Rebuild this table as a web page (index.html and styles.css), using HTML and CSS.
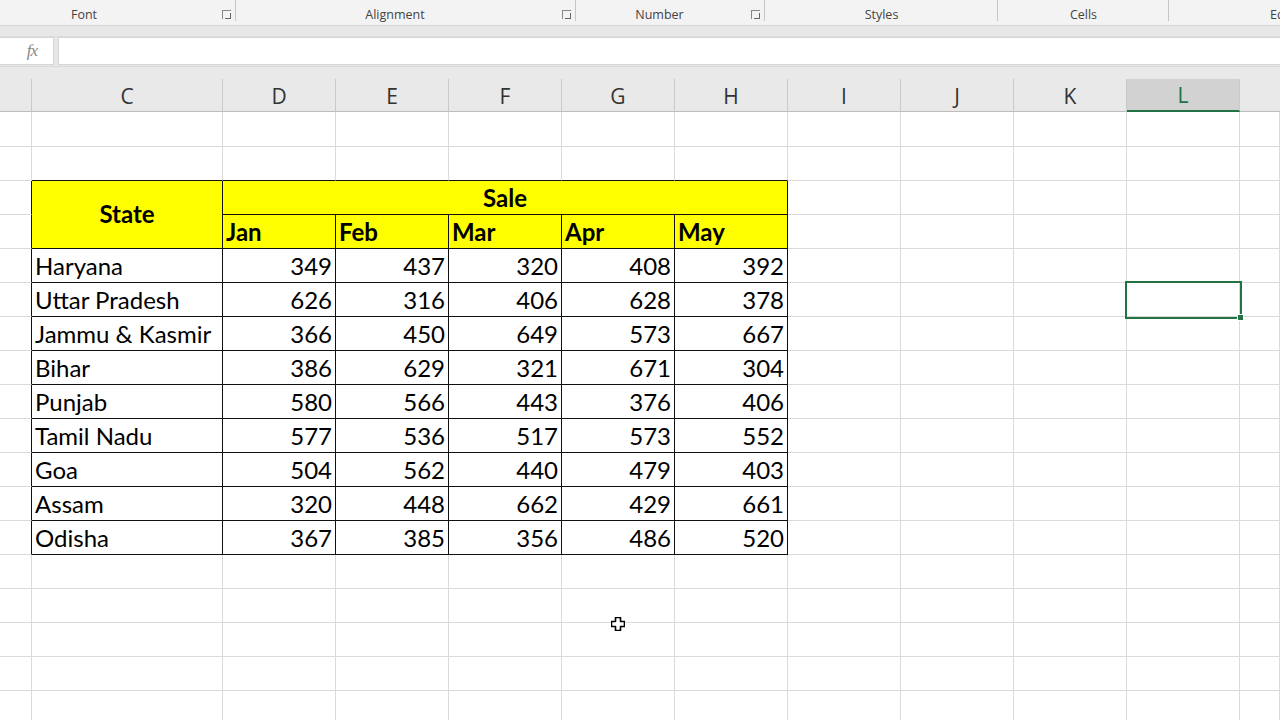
FILE: index.html
```html
<!DOCTYPE html>
<html>
<head>
<meta charset="utf-8">
<link rel="stylesheet" href="styles.css">
</head>
<body>
<div class="app">
  <div class="ribbon">
    <div class="group g-font"><span class="glabel">Font</span><span class="launch"></span></div>
    <div class="group g-align"><span class="glabel">Alignment</span><span class="launch"></span></div>
    <div class="group g-num"><span class="glabel">Number</span><span class="launch"></span></div>
    <div class="group g-styles"><span class="glabel">Styles</span></div>
    <div class="group g-cells"><span class="glabel">Cells</span></div>
    <div class="group g-edit"><span class="glabel">Editing</span></div>
  </div>
  <div class="strip"></div>
  <div class="fbar">
    <div class="fxbox"><span class="fx">fx</span></div>
    <div class="finput"></div>
  </div>
  <div class="colhead">
    <div class="ch corner"></div>
    <div class="ch">C</div>
    <div class="ch">D</div>
    <div class="ch">E</div>
    <div class="ch">F</div>
    <div class="ch">G</div>
    <div class="ch">H</div>
    <div class="ch">I</div>
    <div class="ch">J</div>
    <div class="ch">K</div>
    <div class="ch sel">L</div>
    <div class="ch last"></div>
  </div>
  <div class="sheet">
    <!-- row 1 -->
    <div class="c"></div><div class="c"></div><div class="c"></div><div class="c"></div><div class="c"></div><div class="c"></div><div class="c"></div><div class="c"></div><div class="c"></div><div class="c"></div><div class="c"></div><div class="c"></div>
    <!-- row 2 -->
    <div class="c"></div><div class="c tb"></div><div class="c tb"></div><div class="c tb"></div><div class="c tb"></div><div class="c tb"></div><div class="c tb"></div><div class="c"></div><div class="c"></div><div class="c"></div><div class="c"></div><div class="c"></div>
    <!-- row 3 -->
    <div class="c rb"></div>
    <div class="c t hd state">State</div>
    <div class="c t hd sale">Sale</div>
    <div class="c"></div><div class="c"></div><div class="c"></div><div class="c"></div><div class="c"></div>
    <!-- row 4 -->
    <div class="c rb"></div>
    <div class="c t hd m">Jan</div><div class="c t hd m">Feb</div><div class="c t hd m">Mar</div><div class="c t hd m">Apr</div><div class="c t hd m">May</div>
    <div class="c"></div><div class="c"></div><div class="c"></div><div class="c"></div><div class="c"></div>
    <!-- data -->
    <div class="c rb"></div><div class="c t s">Haryana</div><div class="c t n">349</div><div class="c t n">437</div><div class="c t n">320</div><div class="c t n">408</div><div class="c t n">392</div><div class="c"></div><div class="c"></div><div class="c"></div><div class="c"></div><div class="c"></div>
    <div class="c rb"></div><div class="c t s">Uttar Pradesh</div><div class="c t n">626</div><div class="c t n">316</div><div class="c t n">406</div><div class="c t n">628</div><div class="c t n">378</div><div class="c"></div><div class="c"></div><div class="c"></div><div class="c active"><span class="handle"></span></div><div class="c"></div>
    <div class="c rb"></div><div class="c t s">Jammu &amp; Kasmir</div><div class="c t n">366</div><div class="c t n">450</div><div class="c t n">649</div><div class="c t n">573</div><div class="c t n">667</div><div class="c"></div><div class="c"></div><div class="c"></div><div class="c"></div><div class="c"></div>
    <div class="c rb"></div><div class="c t s">Bihar</div><div class="c t n">386</div><div class="c t n">629</div><div class="c t n">321</div><div class="c t n">671</div><div class="c t n">304</div><div class="c"></div><div class="c"></div><div class="c"></div><div class="c"></div><div class="c"></div>
    <div class="c rb"></div><div class="c t s">Punjab</div><div class="c t n">580</div><div class="c t n">566</div><div class="c t n">443</div><div class="c t n">376</div><div class="c t n">406</div><div class="c"></div><div class="c"></div><div class="c"></div><div class="c"></div><div class="c"></div>
    <div class="c rb"></div><div class="c t s">Tamil Nadu</div><div class="c t n">577</div><div class="c t n">536</div><div class="c t n">517</div><div class="c t n">573</div><div class="c t n">552</div><div class="c"></div><div class="c"></div><div class="c"></div><div class="c"></div><div class="c"></div>
    <div class="c rb"></div><div class="c t s">Goa</div><div class="c t n">504</div><div class="c t n">562</div><div class="c t n">440</div><div class="c t n">479</div><div class="c t n">403</div><div class="c"></div><div class="c"></div><div class="c"></div><div class="c"></div><div class="c"></div>
    <div class="c rb"></div><div class="c t s">Assam</div><div class="c t n">320</div><div class="c t n">448</div><div class="c t n">662</div><div class="c t n">429</div><div class="c t n">661</div><div class="c"></div><div class="c"></div><div class="c"></div><div class="c"></div><div class="c"></div>
    <div class="c rb"></div><div class="c t s">Odisha</div><div class="c t n">367</div><div class="c t n">385</div><div class="c t n">356</div><div class="c t n">486</div><div class="c t n">520</div><div class="c"></div><div class="c"></div><div class="c"></div><div class="c"></div><div class="c"></div>
    <!-- empty rows -->
    <div class="c"></div><div class="c"></div><div class="c"></div><div class="c"></div><div class="c"></div><div class="c"></div><div class="c"></div><div class="c"></div><div class="c"></div><div class="c"></div><div class="c"></div><div class="c"></div>
    <div class="c"></div><div class="c"></div><div class="c"></div><div class="c"></div><div class="c"></div><div class="c cursor-cell"><svg class="cursor" width="14" height="14" viewBox="0 0 14 14"><path d="M4.5 0.5 H9.5 V4.5 H13.5 V9.5 H9.5 V13.5 H4.5 V9.5 H0.5 V4.5 H4.5 Z" fill="#fff" stroke="#000" stroke-width="1.6" stroke-linejoin="round"/></svg></div><div class="c"></div><div class="c"></div><div class="c"></div><div class="c"></div><div class="c"></div><div class="c"></div>
    <div class="c"></div><div class="c"></div><div class="c"></div><div class="c"></div><div class="c"></div><div class="c"></div><div class="c"></div><div class="c"></div><div class="c"></div><div class="c"></div><div class="c"></div><div class="c"></div>
    <div class="c"></div><div class="c"></div><div class="c"></div><div class="c"></div><div class="c"></div><div class="c"></div><div class="c"></div><div class="c"></div><div class="c"></div><div class="c"></div><div class="c"></div><div class="c"></div>
    <div class="c"></div><div class="c"></div><div class="c"></div><div class="c"></div><div class="c"></div><div class="c"></div><div class="c"></div><div class="c"></div><div class="c"></div><div class="c"></div><div class="c"></div><div class="c"></div>
  </div>
</div>
</body>
</html>
```
FILE: styles.css
```css
* { box-sizing: border-box; }
html, body { margin: 0; padding: 0; }
body { width: 1280px; height: 720px; overflow: hidden; background: #fff; }
.app { width: 1280px; height: 720px; overflow: hidden; display: flex; flex-direction: column; }

.ribbon {
  height: 26px; background: #f3f3f3; border-bottom: 1px solid #d5d5d5;
  display: flex; font-family: "Open Sans", "Noto Sans", sans-serif; font-size: 12.5px; color: #444;
}
.group { position: relative; flex: none; height: 100%; display: flex; align-items: flex-start; justify-content: center; padding-top: 6px; }
.group::after { content: ""; position: absolute; right: 0; top: 0; height: 21px; width: 1px; background: #c6c6c6; }
.g-font { width: 236px; padding-right: 68px; }
.g-align { width: 340px; padding-right: 22px; }
.g-num { width: 189px; padding-right: 22px; }
.g-styles { width: 233px; }
.g-cells { width: 171px; }
.g-edit { width: 111px; justify-content: flex-start; padding-left: 101px; overflow: hidden; }
.g-edit::after { display: none; }
.launch { position: absolute; right: 5px; top: 10px; width: 9px; height: 9px; border-left: 1px solid #888; border-top: 1px solid #888; }
.launch::after { content: ""; position: absolute; left: 2px; top: 2px; width: 5px; height: 5px; border-right: 1px solid #666; border-bottom: 1px solid #666; }

.strip { height: 11px; background: #e7e7e7; border-bottom: 1px solid #dcdcdc; }

.fbar { height: 29px; background: #e7e7e7; display: flex; gap: 4px; padding: 0 0 1px 0; }
.fxbox { width: 54px; background: #fff; border: 1px solid #d6d6d6; border-left: none; display: flex; align-items: center; justify-content: flex-end; padding-right: 16px; }
.fx { font-family: "Liberation Serif", serif; font-style: italic; font-size: 17px; color: #888; letter-spacing: -1px; }
.finput { flex: 1; background: #fff; border: 1px solid #d6d6d6; border-right: none; }

.colhead {
  height: 46px; background: #e9e9e9; border-top: 1px solid #dadada;
  display: grid; grid-template-columns: 32px 191px repeat(9, 113px) 1fr;
  align-items: end; font-family: "Open Sans", "Noto Sans", sans-serif; font-size: 21px; color: #333;
}
.ch { height: 33px; border-right: 1px solid #c9c9c9; border-bottom: 1px solid #bdbdbd; display: flex; align-items: center; justify-content: center; padding-top: 1px; }
.ch.sel { background: #d2d2d2; color: #217346; border-bottom: 2px solid #217346; }
.ch.last { border-right: none; }

.sheet {
  flex: 1; display: grid; grid-template-columns: 32px 191px repeat(9, 113px) 1fr;
  grid-template-rows: 35px; grid-auto-rows: 34px; overflow: hidden;
  font-family: "Lato", "Carlito", sans-serif; font-size: 24px; color: #000;
}
.c { border-right: 1px solid #dadada; border-bottom: 1px solid #dadada; display: flex; align-items: flex-end; padding: 0 3px 1px 3px; line-height: 1.2; white-space: nowrap; }
.c.rb { border-right-color: #111; }
.c.tb { border-bottom-color: #111; }
.c.t { border-right-color: #111; border-bottom-color: #111; }
.hd { background: #ffff00; font-weight: bold; }
.state { grid-row: span 2; justify-content: center; align-items: center; padding-bottom: 0; }
.sale { grid-column: span 5; justify-content: center; }
.n { justify-content: flex-end; }
.active { position: relative; outline: 2px solid #217346; outline-offset: 0; }
.handle { position: absolute; right: -5px; bottom: -5px; width: 7px; height: 7px; background: #217346; border: 1px solid #fff; }
.cursor-cell { position: relative; }
.cursor { position: absolute; left: 49px; top: 28px; }
```
